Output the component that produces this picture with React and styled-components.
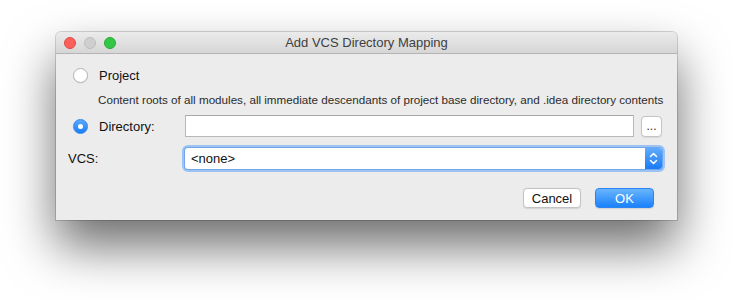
import React from "react";
import styled, { createGlobalStyle } from "styled-components";

const Global = createGlobalStyle`
  html, body { margin: 0; padding: 0; background: #ffffff; }
  body { font-family: "Liberation Sans", Arial, sans-serif; -webkit-font-smoothing: antialiased; }
  * { box-sizing: border-box; }
`;

const Stage = styled.div`
  width: 733px;
  height: 300px;
  padding: 32px 0 0 56px;
  overflow: hidden;
`;

const Window = styled.div`
  width: 621px;
  background: #ececec;
  border-radius: 5px 5px 0 0;
  box-shadow: 0 0 0 1px rgba(0, 0, 0, 0.16), 0 26px 50px rgba(0, 0, 0, 0.58);
  display: flex;
  flex-direction: column;
`;

const TitleBar = styled.div`
  height: 22px;
  background: linear-gradient(#ebebeb, #d6d6d6);
  border-bottom: 1px solid #b4b4b4;
  border-radius: 5px 5px 0 0;
  display: flex;
  align-items: center;
  position: relative;
  padding-left: 8px;
`;

const Lights = styled.div`
  display: flex;
  gap: 8px;
`;

const Light = styled.span`
  width: 12px;
  height: 12px;
  border-radius: 50%;
  background: ${(p) => p.$fill};
  border: 1px solid ${(p) => p.$edge};
`;

const Title = styled.div`
  position: absolute;
  left: 0;
  right: 0;
  top: 0;
  bottom: 0;
  display: flex;
  align-items: center;
  justify-content: center;
  font-size: 13px;
  color: #404040;
  pointer-events: none;
`;

const Body = styled.div`
  display: flex;
  flex-direction: column;
  padding: 10px 15px 12px 12px;
  font-size: 13px;
  color: #111111;
`;

const Row = styled.div`
  display: flex;
  align-items: center;
  height: 22px;
  margin-top: ${(p) => p.$mt || 0}px;
`;

const Choice = styled.label`
  display: flex;
  align-items: center;
  gap: 11px;
  padding-left: 5px;
  width: ${(p) => (p.$w ? `${p.$w}px` : "auto")};
  flex-shrink: 0;
`;

const Label = styled.span`
  width: 117px;
  flex-shrink: 0;
`;

const Radio = styled.span`
  width: 15px;
  height: 15px;
  border-radius: 50%;
  display: flex;
  align-items: center;
  justify-content: center;
  background: ${(p) => (p.$on ? "linear-gradient(#5aa9ff, #1b7df5)" : "#ffffff")};
  border: 1px solid ${(p) => (p.$on ? "#2f86ee" : "#b3b3b3")};
  box-shadow: ${(p) => (p.$on ? "none" : "0 0.5px 1px rgba(0,0,0,0.08)")};
  &::after {
    content: "";
    width: 5px;
    height: 5px;
    border-radius: 50%;
    background: #ffffff;
    display: ${(p) => (p.$on ? "block" : "none")};
  }
`;

const Hint = styled.div`
  margin-top: 7px;
  padding-left: 30px;
  font-size: 11.65px;
  line-height: 14px;
  color: #2b2b2b;
  white-space: nowrap;
`;

const Field = styled.div`
  flex: 1;
  height: 22px;
  background: #ffffff;
  border: 1px solid #b8b8b8;
  border-top-color: #a9a9a9;
`;

const Browse = styled.button`
  margin-left: 7px;
  width: 21px;
  height: 21px;
  padding: 0 0 4px;
  border: 1px solid #c4c4c4;
  border-radius: 4px;
  background: #ffffff;
  font-family: inherit;
  font-size: 12px;
  line-height: 1;
  color: #4a2020;
  display: flex;
  align-items: flex-end;
  justify-content: center;
  box-shadow: 0 0.5px 1px rgba(0, 0, 0, 0.08);
`;

const Combo = styled.div`
  flex: 1;
  height: 21px;
  display: flex;
  align-items: stretch;
  background: #ffffff;
  border-radius: 3px;
  box-shadow: 0 0 0 1px #6fa7ef, 0 0 0 3px #9dc3f5;
`;

const ComboText = styled.div`
  flex: 1;
  display: flex;
  align-items: center;
  padding-left: 6px;
  font-size: 13px;
  color: #111;
`;

const Stepper = styled.div`
  width: 17px;
  background: linear-gradient(#62abfc, #1a7bf6);
  border-radius: 0 3px 3px 0;
  display: flex;
  align-items: center;
  justify-content: center;
`;

const Footer = styled.div`
  display: flex;
  justify-content: flex-end;
  gap: 14px;
  margin-top: 19px;
  padding-right: 8px;
`;

const Button = styled.button`
  width: ${(p) => p.$w}px;
  height: 20px;
  padding: 0;
  border-radius: 4px;
  font-family: inherit;
  font-size: 13px;
  line-height: 1;
  display: flex;
  align-items: center;
  justify-content: center;
  color: ${(p) => (p.$primary ? "#ffffff" : "#111111")};
  background: ${(p) => (p.$primary ? "linear-gradient(#6ab4fd, #1a82fb)" : "#ffffff")};
  border: 1px solid ${(p) => (p.$primary ? "#2a85f3" : "#c3c3c3")};
  box-shadow: 0 0.5px 1px rgba(0, 0, 0, 0.1);
`;

export default function App() {
  return (
    <Stage>
      <Global />
      <Window>
        <TitleBar>
          <Lights>
            <Light $fill="#fc605b" $edge="#de4a43" />
            <Light $fill="#cfcfcf" $edge="#bdbdbd" />
            <Light $fill="#33c748" $edge="#25a935" />
          </Lights>
          <Title>Add VCS Directory Mapping</Title>
        </TitleBar>
        <Body>
          <Row>
            <Choice>
              <Radio />
              <span>Project</span>
            </Choice>
          </Row>
          <Hint>
            Content roots of all modules, all immediate descendants of project base directory, and .idea directory contents
          </Hint>
          <Row $mt={8}>
            <Choice $w={117}>
              <Radio $on />
              <span>Directory:</span>
            </Choice>
            <Field />
            <Browse>...</Browse>
          </Row>
          <Row $mt={10}>
            <Label>VCS:</Label>
            <Combo>
              <ComboText>&lt;none&gt;</ComboText>
              <Stepper>
                <svg width="9" height="13" viewBox="0 0 9 13" fill="none">
                  <path d="M1.5 4.5 L4.5 1.5 L7.5 4.5" stroke="#fff" strokeWidth="1.5" strokeLinecap="round" strokeLinejoin="round" />
                  <path d="M1.5 8.5 L4.5 11.5 L7.5 8.5" stroke="#fff" strokeWidth="1.5" strokeLinecap="round" strokeLinejoin="round" />
                </svg>
              </Stepper>
            </Combo>
          </Row>
          <Footer>
            <Button $w={58}>Cancel</Button>
            <Button $w={59} $primary>OK</Button>
          </Footer>
        </Body>
      </Window>
    </Stage>
  );
}
